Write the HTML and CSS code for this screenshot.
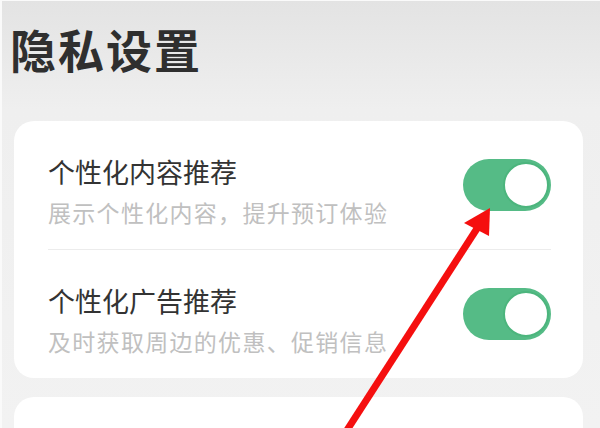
FILE: index.html
```html
<!DOCTYPE html>
<html lang="zh-CN">

<head>
  <meta charset="UTF-8">
  <meta name="viewport" content="width=device-width, initial-scale=1.0">
  <title>隐私设置</title>
  <link rel="stylesheet" href="styles.css">
</head>

<body>

  <div class="page">
    <h1 class="page-title">隐私设置</h1>

    <div class="card">
      <div class="setting-row">
        <div class="setting-text">
          <p class="setting-name">个性化内容推荐</p>
          <p class="setting-desc">展示个性化内容，提升预订体验</p>
        </div>
        <div class="switch on"><span class="knob"></span></div>
      </div>

      <div class="divider"></div>

      <div class="setting-row">
        <div class="setting-text">
          <p class="setting-name">个性化广告推荐</p>
          <p class="setting-desc">及时获取周边的优惠、促销信息</p>
        </div>
        <div class="switch on"><span class="knob"></span></div>
      </div>
    </div>

    <div class="card card-next"></div>

    <!-- red annotation arrow pointing at the first switch -->
    <svg class="arrow" width="600" height="428" viewBox="0 0 600 428">
      <line x1="338" y1="440" x2="476" y2="226" stroke="#f50f0f" stroke-width="7" />
      <polygon points="488,207 462,222 487,235" fill="#f50f0f" />
    </svg>
  </div>

</body>

</html>
```

FILE: styles.css
```css
* {
  margin: 0;
  padding: 0;
  box-sizing: border-box;
}

body {
  width: 600px;
  height: 428px;
  overflow: hidden;
  font-family: "Noto Sans CJK SC", "Noto Sans", sans-serif;
  background: linear-gradient(#e3e3e3 0px, #efefef 110px, #f2f2f2 100%);
}

.page {
  position: relative;
  height: 428px;
  overflow: hidden;
  padding: 19px 17px 0 12px;
  border-left: 2px solid #fafafa;
  border-top: 1px solid #fafafa;
}

.page-title {
  font-size: 46px;
  line-height: 56px;
  font-weight: 700;
  letter-spacing: 2px;
  color: #2f2f2f;
  margin-left: -4px;
}

.card {
  margin-top: 45px;
  background-color: #fff;
  border-radius: 20px;
  padding: 0 32px 0 34px;
}

.setting-row {
  display: flex;
  justify-content: space-between;
  align-items: flex-start;
  padding: 33px 0 21px;
}

.setting-name {
  font-size: 27px;
  line-height: 36px;
  color: #333;
}

.setting-desc {
  margin-top: 6px;
  font-size: 23px;
  line-height: 32px;
  letter-spacing: 1.3px;
  color: #c0c0c0;
}

.divider {
  height: 1px;
  background-color: #ececec;
}

/* Switch */
.switch {
  position: relative;
  width: 88px;
  height: 52px;
  margin-top: 5px;
  border-radius: 26px;
  background-color: #e0e0e0;
}

.switch.on {
  background-color: #55bb86;
}

.knob {
  position: absolute;
  top: 3px;
  right: 2px;
  width: 46px;
  height: 46px;
  border-radius: 50%;
  background-color: #fff;
  border: 2px solid #4cb57d;
}

.card-next {
  margin-top: 19px;
  height: 32px;
  border-radius: 20px 20px 0 0;
}

.arrow {
  position: absolute;
  top: 0;
  left: 0;
}
```
